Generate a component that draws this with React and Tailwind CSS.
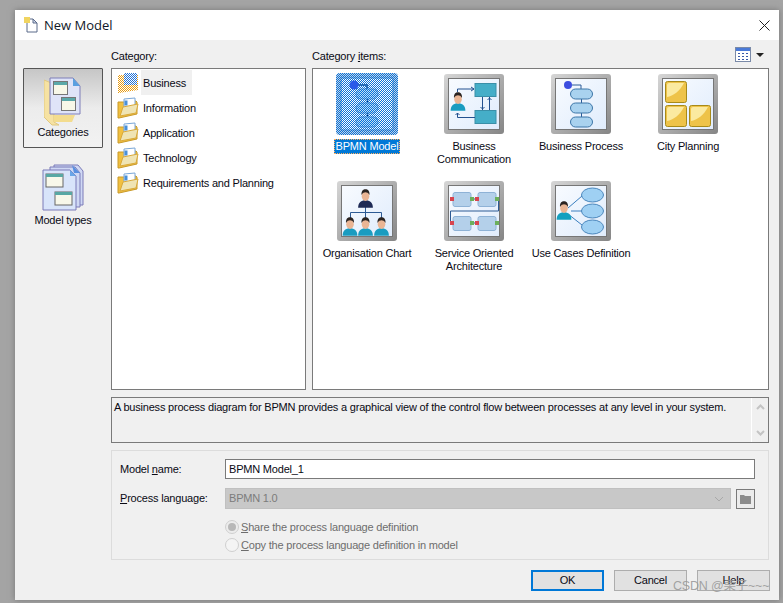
import React from "react";

const FONT = "font-['Liberation_Sans',Arial,sans-serif]";

// person used in the model tiles
const Person = ({ x, y, s = 1, body = "#1a9cc0" }) => (
  <g transform={`translate(${x} ${y}) scale(${s})`}>
    <path d="M-7 14c0-5 3-7 7-7s7 2 7 7z" fill={body} />
    <ellipse cx="0" cy="3" rx="3.6" ry="4.6" fill="#eab594" />
    <path d="M-3.800 2c-.4-4 1.600-5.600 3.800-5.600S4.200-2 3.800 2C3 0 1-.6 0-.6S-3 0-3.800 2z" fill="#2a2320" />
  </g>
);

const Frame = ({ children, id }) => (
  <svg width="60" height="60" viewBox="0 0 60 60" className="block shrink-0">
    <defs>
      <linearGradient id={`f${id}`} x1="0" y1="0" x2="1" y2="1">
        <stop offset="0" stopColor="#d6d6d6" />
        <stop offset="1" stopColor="#858585" />
      </linearGradient>
      <linearGradient id={`i${id}`} x1="0" y1="0" x2="1" y2="1">
        <stop offset="0" stopColor="#f8fbff" />
        <stop offset="1" stopColor="#e0ecfc" />
      </linearGradient>
    </defs>
    <rect x="0" y="0" width="60" height="60" rx="3" fill={`url(#f${id})`} />
    <rect x="4.500" y="4.500" width="51" height="51" fill={`url(#i${id})`} stroke="#767676" />
    {children}
  </svg>
);

const Pill = ({ y }) => <rect x="19.500" y={y} width="22" height="10" rx="5" fill="#a9d2ef" stroke="#3d76a8" />;

const ProcessArt = () => (
  <>
    <circle cx="17" cy="11" r="4" fill="#3d4ee0" />
    <path d="M21 11h9v4M30.500 25v4M30.500 39v4" fill="none" stroke="#2a5a98" />
    <Pill y={15} />
    <Pill y={29} />
    <Pill y={43} />
  </>
);

const BpmnTile = () => (
  <svg width="62" height="62" viewBox="0 0 62 62" className="block shrink-0 -mb-px -mt-px">
    <defs>
      <pattern id="dither" width="2" height="2" patternUnits="userSpaceOnUse">
        <rect width="1" height="1" fill="#0a72d8" />
        <rect x="1" y="1" width="1" height="1" fill="#0a72d8" />
      </pattern>
    </defs>
    <rect x="0" y="0" width="62" height="62" rx="4" fill="#c4d4e6" />
    <rect x="5" y="5" width="52" height="52" fill="#ffffff" stroke="#6f9ccc" />
    <path d="M22 12h9v4M31.500 26v4M31.500 40v4" fill="none" stroke="#0a3a78" strokeWidth="1.500" />
    <rect x="20" y="16" width="22" height="10" rx="5" fill="#bfe0f8" stroke="#78a8d8" />
    <rect x="20" y="30" width="22" height="10" rx="5" fill="#bfe0f8" stroke="#78a8d8" />
    <rect x="20" y="44" width="22" height="10" rx="5" fill="#bfe0f8" stroke="#78a8d8" />
    <rect x="0" y="0" width="62" height="62" rx="4" fill="url(#dither)" />
    <circle cx="18" cy="12" r="4.500" fill="#2a5ae8" />
  </svg>
);

const CommunicationArt = () => (
  <>
    <Person x={14} y={22} s={1.050} />
    <rect x="31" y="9.500" width="21" height="13" fill="#45aec8" stroke="#3a8fa8" />
    <rect x="31" y="36.500" width="21" height="13" fill="#45aec8" stroke="#3a8fa8" />
    <path d="M13.500 18v-3H30M27 13l3 2-3 2" fill="none" stroke="#23518f" />
    <path d="M38.500 23v13M36.500 33l2 2 2-2M45.500 36V23M43.500 26l2-2 2 2" fill="none" stroke="#23518f" />
    <path d="M31 43.500H13.500V39M11.500 41l2-2 2 2" fill="none" stroke="#23518f" />
  </>
);

const CityArt = () => (
  <>
    {[[7, 7], [7, 31], [31, 31]].map(([x, y]) => (
      <g key={`${x}-${y}`}>
        <rect x={x + 0.5} y={y + 0.5} width="21" height="21" rx="2" fill="#eec349" stroke="#a78a1a" />
        <path d={`M${x + 2} ${y + 16}c6-1 13-6 17-14h-15a2 2 0 0 0-2 2z`} fill="#fbeaa0" />
      </g>
    ))}
  </>
);

const OrgArt = () => (
  <>
    <path d="M28.500 26v5M13.500 37v-5.500h31V37M28.500 31v6" fill="none" stroke="#2c5a94" />
    <Person x={28.500} y={12} s={1.050} body="#1e2a55" />
    <Person x={13} y={40} s={1.050} />
    <Person x={28.500} y={40} s={1.050} />
    <Person x={44.500} y={40} s={1.050} />
  </>
);

const Svc = ({ x, y }) => (
  <g>
    <rect x={x + 3} y={y + 0.5} width="18" height="14" rx="2" fill="#b4d0ea" stroke="#8eb2d6" />
    <rect x={x} y={y + 5} width="4" height="4" fill="#d8454f" />
    <rect x={x + 20} y={y + 5} width="4" height="4" fill="#6cb05c" />
  </g>
);

const ServiceArt = () => (
  <>
    <path d="M30 18h2M30 42h2M54.500 18v12H6.500v12H8" fill="none" stroke="#2c5a94" />
    <Svc x={6} y={11} />
    <Svc x={31} y={11} />
    <Svc x={6} y={35} />
    <Svc x={31} y={35} />
  </>
);

const UseCaseArt = () => (
  <>
    <path d="M17 27L31 15M20 30H31M17 33L31 44" fill="none" stroke="#3a7fc0" />
    <ellipse cx="41.500" cy="14" rx="11" ry="7" fill="#9fd0f3" stroke="#4a86bc" />
    <ellipse cx="41.500" cy="30" rx="11" ry="7" fill="#9fd0f3" stroke="#4a86bc" />
    <ellipse cx="41.500" cy="46" rx="11" ry="7" fill="#9fd0f3" stroke="#4a86bc" />
    <Person x={13} y={24} s={1.050} body="#14a0bf" />
  </>
);

const items = [
  { label: ["BPMN Model"], selected: true },
  { label: ["Business", "Communication"], art: <CommunicationArt /> },
  { label: ["Business Process"], art: <ProcessArt /> },
  { label: ["City Planning"], art: <CityArt /> },
  { label: ["Organisation Chart"], art: <OrgArt /> },
  { label: ["Service Oriented", "Architecture"], art: <ServiceArt /> },
  { label: ["Use Cases Definition"], art: <UseCaseArt /> },
];

const FolderIcon = ({ selected, id }) => (
  <svg width="22" height="22" viewBox="0 0 22 22" className="block shrink-0">
    <defs>
      <pattern id={`d${id}`} width="2" height="2" patternUnits="userSpaceOnUse">
        <rect width="1" height="1" fill="#ffffff" />
        <rect x="1" y="1" width="1" height="1" fill="#ffffff" />
      </pattern>
    </defs>
    {selected ? (
      <>
        <path d="M1 3h20v15L2 21H1z" fill="#e89a10" />
        <path d="M7 1h13v12H7z" fill="#2272d8" />
        <rect x="0" y="0" width="22" height="22" fill={`url(#d${id})`} />
      </>
    ) : (
      <>
        <path d="M1 5h6l1-1h11l1 1v12L2 21H1z" fill="#f1c040" stroke="#c99a2a" strokeWidth="1" />
        <path d="M7 2l11-1v12L7 14z" fill="#ffffff" stroke="#7aa7d8" />
        <path d="M9 3.500v5" stroke="#4a90d8" strokeWidth="3" />
        <path d="M3 19l3-9 15-3-2 9z" fill="#efe4b4" stroke="#d9a93a" />
      </>
    )}
  </svg>
);

const CategoriesIcon = () => (
  <svg width="38" height="49" viewBox="0 0 38 49" className="block">
    <path d="M0 3l10 4v38l5 3H8L0 40z" fill="#f6e2a2" stroke="#e0c880" />
    <path d="M6 1h23l7 8v28H6z" fill="#dfe4f8" stroke="#7f7fb8" />
    <path d="M29 1l7 8h-7z" fill="#5aa0e0" />
    <path d="M10 38h21l-3 7H10z" fill="#f3dc8e" />
    <rect x="9.500" y="4.500" width="14" height="13" fill="#f8f8e8" stroke="#777" />
    <rect x="10" y="5" width="13" height="3" fill="#5aa9a9" />
    <rect x="17.500" y="20.500" width="14" height="13" fill="#f8f8e8" stroke="#777" />
    <rect x="18" y="21" width="13" height="3" fill="#5aa9a9" />
  </svg>
);

const ModelTypesIcon = () => (
  <svg width="42" height="48" viewBox="0 0 42 48" className="block">
    <path d="M12 1h24l5 6v34H12z" fill="#cfd8f4" stroke="#7a7ab8" />
    <path d="M8 3h25l5 6v34H8z" fill="#cfd8f4" stroke="#7a7ab8" />
    <path d="M30 1l8 8h-6z" fill="#5a90e0" />
    <path d="M1 6h27l6 6v34H1z" fill="#d8e4fa" stroke="#7a7ab8" />
    <path d="M28 6l6 6h-6z" fill="#6aa6e8" />
    <rect x="4" y="10" width="17" height="13" fill="#f8f8ea" stroke="#666" />
    <rect x="4" y="10" width="17" height="3" fill="#58a8a4" />
    <rect x="13" y="28" width="17" height="13" fill="#f8f8ea" stroke="#666" />
    <rect x="13" y="28" width="17" height="3" fill="#58a8a4" />
  </svg>
);

const cats = ["Business", "Information", "Application", "Technology", "Requirements and Planning"];

export default function App() {
  return (
    <div className={`w-[783px] h-[603px] overflow-hidden relative bg-[#a4a4a4] pt-[10px] pl-[15px] ${FONT} text-[11px] tracking-[-0.2px] leading-[13px] text-[#0a0a14]`}>
      <div className="w-[764px] h-[590px] bg-[#f0f0f0] flex flex-col shadow-[0_0_6px_#777]">
        {/* title bar */}
        <div className="h-[30px] bg-white flex items-center pl-[9px] pr-[9px] shrink-0">
          <svg width="14" height="16" viewBox="0 0 14 16" className="block">
            <path d="M3 2h6l4 4v9H3z" fill="#fff" stroke="#5a6a8a" />
            <path d="M9 2l4 4H9z" fill="#cfd8ea" stroke="#5a6a8a" />
            <rect x="0" y="0" width="6" height="6" fill="#f0d460" />
          </svg>
          <span className="ml-[6px] text-[13px] tracking-normal text-[#101828] font-['Open_Sans',sans-serif]">New Model</span>
          <svg width="11" height="11" viewBox="0 0 11 11" className="block ml-auto">
            <path d="M.5.500l10 10M10.500.500l-10 10" stroke="#222" strokeWidth="1" />
          </svg>
        </div>

        <div className="flex pl-[8px] pr-[10px] flex-1">
          {/* left bar */}
          <div className="w-[80px] mr-[8px] pt-[28px] flex flex-col shrink-0">
            <div className="h-[80px] border border-[#555] rounded-[1px] bg-gradient-to-b from-[#c6c6c6] via-[#ececec] to-[#f2f2f2] flex flex-col items-center pt-[8px]">
              <CategoriesIcon />
              <span>Categories</span>
            </div>
            <div className="h-[80px] flex flex-col items-center pt-[16px]">
              <ModelTypesIcon />
              <span className="mt-[2px]">Model types</span>
            </div>
          </div>

          {/* main column */}
          <div className="flex-1 flex flex-col">
            <div className="flex gap-[6px]">
              <div className="w-[195px]">
                <div className="h-[28px] pt-[10px]">Cate<span className="underline">g</span>ory:</div>
                <div className="h-[322px] border border-[#7a7a7a] bg-white pt-[1px] pl-[5px]">
                  {cats.map((c, i) => (
                    <div key={c} className="h-[25px] flex items-center">
                      <FolderIcon selected={i === 0} id={i} />
                      <span className={`ml-[2px] h-[25px] flex items-center pt-[2px] pl-[2px] pr-[6px] ${i === 0 ? "bg-[#f0f0f0]" : ""}`}>{c}</span>
                    </div>
                  ))}
                </div>
              </div>
              <div className="flex-1">
                <div className="h-[28px] flex pt-[10px] justify-between">
                  <span>Category <span className="underline">i</span>tems:</span>
                  <div className="flex items-start -mt-[3px] pr-[5px]">
                    <svg width="16" height="15" viewBox="0 0 16 15" className="block">
                      <rect x=".5" y=".5" width="15" height="14" fill="#fff" stroke="#7a8aa8" />
                      <rect x="1" y="1" width="14" height="3" fill="#4a7ad8" />
                      <path d="M3 6h2v1H3zM7 6h2v1H7zM11 6h2v1h-2zM3 9h2v1H3zM7 9h2v1H7zM11 9h2v1h-2zM3 12h2v1H3zM7 12h2v1H7zM11 12h2v1h-2z" fill="#3a5aa8" />
                    </svg>
                    <div className="ml-[5px] mt-[6px] w-0 h-0 border-x-[4px] border-x-transparent border-t-[4px] border-t-[#222]" />
                  </div>
                </div>
                <div className="h-[322px] border border-[#7a7a7a] bg-white">
                  <div className="grid grid-cols-[repeat(4,106px)] gap-x-px auto-rows-[107px] pl-px pt-[5px]">
                    {items.map((it, i) => (
                      <div key={it.label[0]} className="flex flex-col items-center">
                        {it.selected ? <BpmnTile /> : <Frame id={i}>{it.art}</Frame>}
                        <div className={`mt-[5px] text-center whitespace-nowrap ${it.selected ? "bg-[#0078d7] text-white border border-dotted border-[#ffb060] px-px" : "border border-transparent"}`}>
                          {it.label.map((l) => <div key={l}>{l}</div>)}
                        </div>
                      </div>
                    ))}
                  </div>
                </div>
              </div>
            </div>

            {/* description */}
            <div className="mt-[7px] h-[46px] border border-[#7a7a7a] flex">
              <div className="flex-1 pl-[2px] pt-[3px] whitespace-nowrap">A business process diagram for BPMN provides a graphical view of the control flow between processes at any level in your system.</div>
              <div className="w-[17px] border-l border-white flex flex-col items-center justify-between py-[6px]">
                <svg width="9" height="6" viewBox="0 0 9 6" className="block"><path d="M1 5l3.500-3.500L8 5" fill="none" stroke="#c4c4c4" strokeWidth="2" /></svg>
                <svg width="9" height="6" viewBox="0 0 9 6" className="block"><path d="M1 1l3.500 3.500L8 1" fill="none" stroke="#c4c4c4" strokeWidth="2" /></svg>
              </div>
            </div>

            {/* options group */}
            <div className="mt-[7px] h-[110px] border border-[#dcdcdc] pt-[8px] pl-[8px] pr-[13px]">
              <div className="flex items-center h-[20px]">
                <span className="w-[105px]">Model <span className="underline">n</span>ame:</span>
                <div className="flex-1 h-[20px] border border-[#7a7a7a] bg-white flex items-center pl-[3px]">BPMN Model_1</div>
              </div>
              <div className="flex items-center h-[21px] mt-[9px]">
                <span className="w-[105px]"><span className="underline">P</span>rocess language:</span>
                <div className="flex-1 h-[21px] bg-[#c8c8c8] border border-[#c0c0c0] flex items-center pl-[3px] pr-[6px] text-[#7c7c7c] justify-between">
                  <span>BPMN 1.0</span>
                  <svg width="10" height="6" viewBox="0 0 10 6" className="block"><path d="M1 1l4 4 4-4" fill="none" stroke="#a8a8a8" /></svg>
                </div>
                <div className="ml-[5px] w-[19px] h-[20px] border border-[#7a7a7a] bg-[#ececec] flex items-center justify-center">
                  <svg width="13" height="12" viewBox="0 0 13 12" className="block"><path d="M1 2h4l1 1h6v8H1z" fill="#8c8c8c" /></svg>
                </div>
              </div>
              <div className="pl-[105px] mt-[9px] text-[#6d6d6d]">
                <div className="flex items-center h-[18px]">
                  <span className="w-[14px] h-[14px] rounded-full border border-[#cfcfcf] bg-[#ececec] flex items-center justify-center"><span className="w-[8px] h-[8px] rounded-full bg-[#b8b8b8]" /></span>
                  <span className="ml-[2px]"><span className="underline">S</span>hare the process language definition</span>
                </div>
                <div className="flex items-center h-[18px]">
                  <span className="w-[14px] h-[14px] rounded-full border border-[#cfcfcf] bg-[#f4f4f4]" />
                  <span className="ml-[2px]"><span className="underline">C</span>opy the process language definition in model</span>
                </div>
              </div>
            </div>

            {/* buttons */}
            <div className="flex justify-end gap-[10px] mt-[10px] -mr-px">
              <div className="w-[73px] h-[21px] border-2 border-[#0078d7] bg-[#e1e1e1] flex items-center justify-center">OK</div>
              <div className="w-[73px] h-[21px] border border-[#adadad] bg-[#e1e1e1] flex items-center justify-center">Cancel</div>
              <div className="w-[73px] h-[21px] border border-[#adadad] bg-[#e1e1e1] flex items-center justify-center">Help</div>
            </div>
          </div>
        </div>
      </div>
      {/* site watermark */}
      <span className="absolute left-[673px] top-[579px] text-[12.500px] leading-[15px] text-[#9a9a9a]/90 font-['Liberation_Sans','Noto_Sans_CJK_SC',sans-serif] whitespace-nowrap">CSDN @栗子~~~</span>
    </div>
  );
}
